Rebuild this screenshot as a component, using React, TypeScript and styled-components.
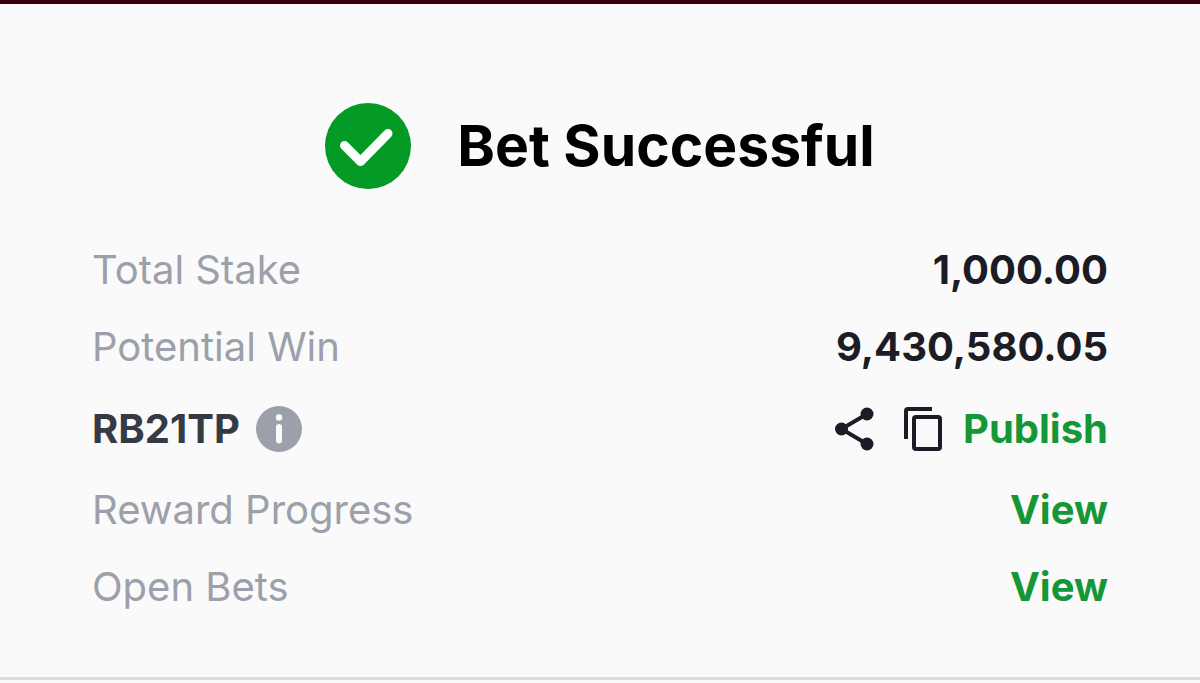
import React from "react";
import styled, { createGlobalStyle } from "styled-components";

const GlobalStyle = createGlobalStyle`
  *, *::before, *::after { box-sizing: border-box; }
  body {
    margin: 0;
    background: #fafafa;
    font-family: Inter, "Liberation Sans", sans-serif;
  }
`;

const Receipt = styled.main`
  padding: 99px 92px 66px;
  border-top: 4px solid #38000a;
  border-bottom: 3px solid #dcdce2;
  background: #fafafa;
`;

const Header = styled.header`
  display: flex;
  align-items: center;
  justify-content: center;
  gap: 46px;
  margin-bottom: 57px;
`;

const Title = styled.h1`
  margin: 0;
  color: #000;
  font-size: 57px;
  font-weight: 700;
  line-height: 72px;
`;

const Details = styled.dl`
  display: flex;
  flex-direction: column;
  gap: 29px;
  margin: 0;
`;

const Row = styled.div<{ $tall?: boolean }>`
  display: flex;
  align-items: center;
  justify-content: space-between;
  min-height: ${(p) => (p.$tall ? 57 : 48)}px;
  font-size: 40px;
  line-height: 48px;
`;

const Label = styled.dt<{ $strong?: boolean }>`
  display: flex;
  align-items: center;
  gap: 16px;
  color: ${(p) => (p.$strong ? "#353a45" : "#9ca0ab")};
  font-weight: ${(p) => (p.$strong ? 700 : 400)};
`;

const Value = styled.dd`
  display: flex;
  align-items: center;
  margin: 0;
  color: #1b1c25;
  font-weight: 700;
`;

const Actions = styled.div`
  display: flex;
  align-items: center;
  gap: 20px;
`;

const IconButton = styled.button`
  display: flex;
  padding: 0;
  border: 0;
  background: none;
  color: #1b1c25;
  cursor: pointer;
`;

const ActionLink = styled.a`
  color: #159737;
  font-weight: 700;
  text-decoration: none;
`;

const CheckIcon = () => (
  <svg width="86" height="86" viewBox="0 0 86 86" aria-hidden="true">
    <circle cx="43" cy="43" r="43" fill="#039b25" />
    <path
      d="M19.5 42.5 35.5 58.5 63 30.5"
      fill="none"
      stroke="#fff"
      strokeWidth="9"
      strokeLinecap="round"
      strokeLinejoin="round"
    />
  </svg>
);

const InfoIcon = () => (
  <svg width="46" height="46" viewBox="0 0 46 46" aria-hidden="true">
    <circle cx="23" cy="23" r="23" fill="#9ca0ab" />
    <circle cx="23" cy="11.5" r="3.2" fill="#fafafa" />
    <path d="M23 21V34.5" stroke="#fafafa" strokeWidth="6" strokeLinecap="round" />
  </svg>
);

const ShareIcon = () => (
  <svg width="48" height="46" viewBox="0 0 48 46" aria-hidden="true">
    <path d="M32 8 6.500 23 32 38" fill="none" stroke="currentColor" strokeWidth="4" />
    <circle cx="32" cy="8" r="6.500" fill="currentColor" />
    <circle cx="6.500" cy="23" r="6.500" fill="currentColor" />
    <circle cx="32" cy="38" r="6.500" fill="currentColor" />
  </svg>
);

const CopyIcon = () => (
  <svg width="40" height="46" viewBox="0 0 40 46" aria-hidden="true">
    <g fill="none" stroke="currentColor" strokeWidth="4">
      <path d="M29 3H5Q3 3 3 5V33" />
      <rect x="11" y="11" width="26" height="32" rx="2" />
    </g>
  </svg>
);

export default function App() {
  return (
    <>
      <GlobalStyle />
      <Receipt>
        <Header>
          <CheckIcon />
          <Title>Bet Successful</Title>
        </Header>
        <Details>
          <Row>
            <Label>Total Stake</Label>
            <Value>1,000.00</Value>
          </Row>
          <Row>
            <Label>Potential Win</Label>
            <Value>9,430,580.05</Value>
          </Row>
          <Row $tall>
            <Label $strong>
              RB21TP
              <IconButton type="button" aria-label="About the booking code">
                <InfoIcon />
              </IconButton>
            </Label>
            <Value>
              <Actions>
                <IconButton type="button" aria-label="Share">
                  <ShareIcon />
                </IconButton>
                <IconButton type="button" aria-label="Copy code">
                  <CopyIcon />
                </IconButton>
                <ActionLink href="#publish">Publish</ActionLink>
              </Actions>
            </Value>
          </Row>
          <Row>
            <Label>Reward Progress</Label>
            <Value>
              <ActionLink href="#rewards">View</ActionLink>
            </Value>
          </Row>
          <Row>
            <Label>Open Bets</Label>
            <Value>
              <ActionLink href="#open-bets">View</ActionLink>
            </Value>
          </Row>
        </Details>
      </Receipt>
    </>
  );
}
